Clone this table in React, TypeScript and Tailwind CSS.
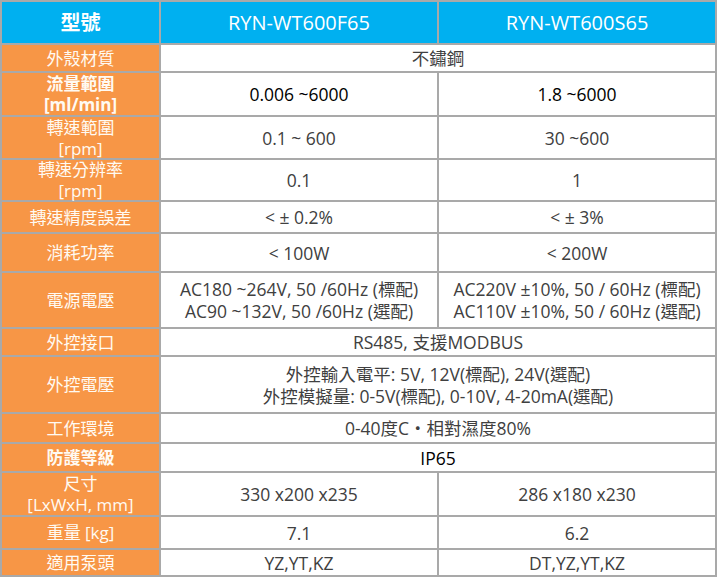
import React from "react";

const font = '"Open Sans", "Noto Sans CJK TC", sans-serif';

type Row = {
  label: React.ReactNode;
  bold?: boolean;
  span?: React.ReactNode;
  a?: React.ReactNode;
  b?: React.ReactNode;
};

const rows: Row[] = [
  { label: "外殼材質", span: "不鏽鋼" },
  { label: <>流量範圍<br />[ml/min]</>, bold: true, a: "0.006 ~6000", b: "1.8 ~6000" },
  { label: <>轉速範圍<br />[rpm]</>, a: "0.1 ~ 600", b: "30 ~600" },
  { label: <>轉速分辨率<br />[rpm]</>, a: "0.1", b: "1" },
  { label: "轉速精度誤差", a: "< ± 0.2%", b: "< ± 3%" },
  { label: "消耗功率", a: "< 100W", b: "< 200W" },
  {
    label: "電源電壓",
    a: <>AC180 ~264V, 50 /60Hz (標配)<br />AC90 ~132V, 50 /60Hz (選配)</>,
    b: <>AC220V ±10%, 50 / 60Hz (標配)<br />AC110V ±10%, 50 / 60Hz (選配)</>,
  },
  { label: "外控接口", span: "RS485, 支援MODBUS" },
  {
    label: "外控電壓",
    span: <>外控輸入電平: 5V, 12V(標配), 24V(選配)<br />外控模擬量: 0-5V(標配), 0-10V, 4-20mA(選配)</>,
  },
  { label: "工作環境", span: "0-40度C・相對濕度80%" },
  { label: "防護等級", bold: true, span: "IP65" },
  { label: <>尺寸<br />[LxWxH, mm]</>, a: "330 x200 x235", b: "286 x180 x230" },
  { label: "重量 [kg]", a: "7.1", b: "6.2" },
  { label: "適用泵頭", a: "YZ,YT,KZ", b: "DT,YZ,YT,KZ" },
];

export default function App() {
  return (
    <div className="w-[717px] h-[577px] bg-white" style={{ fontFamily: font }}>
      <div className="grid grid-cols-[157px_276px_276px] grid-rows-[41px_26px_42px_41px_40px_30px_37px_54px_26px_55px_28px_27px_42px_31px_25px] gap-[2px] p-[2px] bg-[#a9a9a9] text-[17px] leading-[21px]">
        <div className="bg-[#00b0f0] text-white font-bold text-[20px] flex items-center justify-center">型號</div>
        <div className="bg-[#00b0f0] text-white text-[20px] flex items-center justify-center">RYN-WT600F65</div>
        <div className="bg-[#00b0f0] text-white text-[20px] flex items-center justify-center">RYN-WT600S65</div>
        {rows.map((r, i) => (
          <React.Fragment key={i}>
            <div
              className={`bg-[#f79646] text-[#fffaf2] flex items-center justify-center text-center ${r.bold ? "font-bold" : ""}`}
            >
              <div>{r.label}</div>
            </div>
            {r.span !== undefined ? (
              <div className={`col-span-2 bg-white flex items-center justify-center text-center text-[17.5px] leading-[22px] ${r.bold ? "text-black font-medium" : "text-[#404040]"}`}>
                <div>{r.span}</div>
              </div>
            ) : (
              <>
                <div className={`bg-white flex items-center justify-center text-center text-[17.5px] leading-[22px] ${r.bold ? "text-black font-medium" : "text-[#404040]"}`}>
                  <div>{r.a}</div>
                </div>
                <div className={`bg-white flex items-center justify-center text-center text-[17.5px] leading-[22px] ${r.bold ? "text-black font-medium" : "text-[#404040]"}`}>
                  <div>{r.b}</div>
                </div>
              </>
            )}
          </React.Fragment>
        ))}
      </div>
    </div>
  );
}
